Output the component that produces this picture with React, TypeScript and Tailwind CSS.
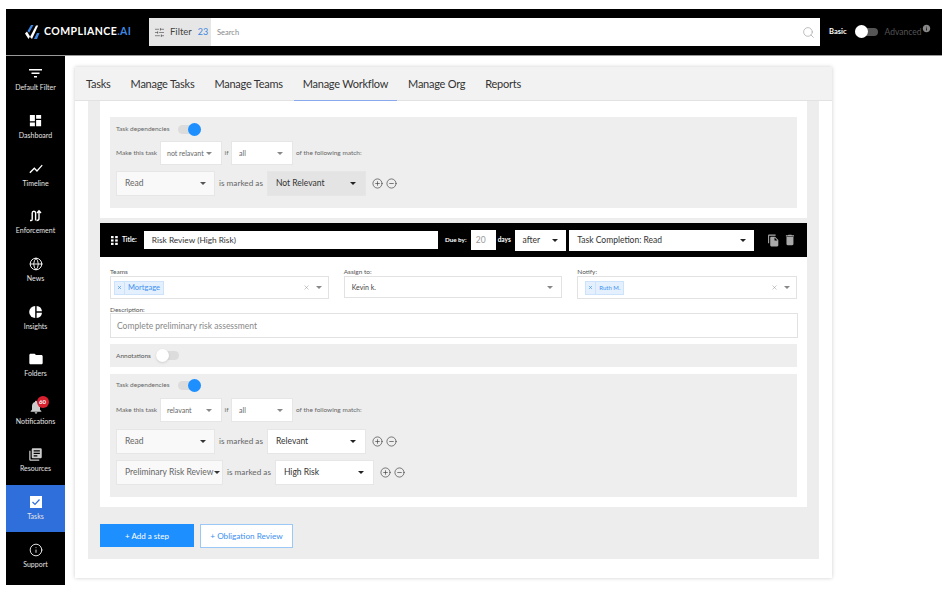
import React from "react";
import { Search, SlidersHorizontal, Globe, CirclePlus, CircleMinus, X, Info } from "lucide-react";
import { MdDashboard, MdShowChart, MdFolder, MdNotifications, MdLibraryBooks, MdFileCopy, MdDelete, MdInfo } from "react-icons/md";

const Caret = ({ className = "border-t-[#555]" }: { className?: string }) => (
  <span className={`w-0 h-0 border-x-[3px] border-x-transparent border-t-[3px] ${className}`} />
);

const Toggle = ({ on }: { on?: boolean }) => (
  <span className="relative block w-[23px] h-[9px] rounded-full bg-[#dcdcdc]">
    <span
      className={
        on
          ? "absolute right-0 top-[-2px] w-[13px] h-[13px] rounded-full bg-[#1e8fff]"
          : "absolute left-0 top-[-2px] w-[13px] h-[13px] rounded-full bg-white shadow"
      }
    />
  </span>
);

const Select = ({
  label,
  className,
  text = "text-[#555] text-[8.5px]",
  caret,
}: {
  label: string;
  className: string;
  text?: string;
  caret?: string;
}) => (
  <div className={`flex items-center justify-between border border-[#e6e6e6] ${className}`}>
    <span className={`whitespace-nowrap ${text}`}>{label}</span>
    <Caret className={caret} />
  </div>
);

const PlusMinus = () => (
  <div className="flex items-center gap-[3px] ml-[2px] text-[#444]">
    <CirclePlus size={11} strokeWidth={1.5} />
    <CircleMinus size={11} strokeWidth={1.5} />
  </div>
);

const Marked = () => <span className="text-[8.2px] text-[#666] whitespace-nowrap">is marked as</span>;

const MatchRow = ({ verb }: { verb: string }) => (
  <div className="flex items-center h-[24px] text-[6.5px] text-[#666]">
    <span className="w-[44px] whitespace-nowrap">Make this task</span>
    <Select label={verb} className="w-[62px] h-[24px] bg-white pl-[6px] pr-[9px]" text="text-[#666] text-[7px]" caret="border-t-[#888]" />
    <span className="w-[9px] text-center">if</span>
    <Select label="all" className="w-[62px] h-[24px] bg-white pl-[7px] pr-[9px]" text="text-[#666] text-[7px]" caret="border-t-[#888]" />
    <span className="ml-[3px] whitespace-nowrap">of the following match:</span>
  </div>
);

const DepHeader = () => (
  <div className="flex items-center h-[12px] text-[6.5px] text-[#666]">
    <span className="w-[62px] whitespace-nowrap">Task dependencies</span>
    <Toggle on />
  </div>
);

const Chip = ({ label, size }: { label: string; size: string }) => (
  <div className={`flex items-center h-[14px] bg-[#e4f0fd] border border-[#cde2fb] text-[#3d90f0] ${size}`}>
    <span className="flex items-center justify-center w-[10px] h-full border-r border-[#cde2fb]">
      <X size={5} strokeWidth={3} />
    </span>
    <span className="px-[3px] whitespace-nowrap">{label}</span>
  </div>
);

const ClearCaret = () => (
  <div className="flex items-center gap-[6px] text-[#888]">
    <X size={7} strokeWidth={1.5} />
    <Caret className="border-t-[#888]" />
  </div>
);

const Enforcement = () => (
  <svg width="14" height="14" viewBox="0 0 14 14" fill="none" stroke="white" strokeWidth="1.4">
    <path d="M1 11.5h1.2c.8 0 1-.6 1-1.2V4c0-2.4 3.4-2.4 3.4 0v7.5M7.6 11.5c1.6 0 2.4-.8 2.4-2V2M8 4l2-2.2L12 4" />
  </svg>
);

const InsightsIcon = () => (
  <svg width="14" height="14" viewBox="0 0 14 14" fill="white">
    <path d="M6.2 1A6 6 0 0 0 6.2 13z" />
    <path d="M7.6 1A6 6 0 0 1 13 6.3H7.6z" />
    <path d="M7.6 7.7H13A6 6 0 0 1 7.6 13z" />
  </svg>
);

const Grip = () => (
  <svg width="7" height="9" viewBox="0 0 7 9" fill="white">
    <rect x="0" y="0" width="2.6" height="2.2" />
    <rect x="4.2" y="0" width="2.6" height="2.2" />
    <rect x="0" y="3.4" width="2.6" height="2.2" />
    <rect x="4.2" y="3.4" width="2.6" height="2.2" />
    <rect x="0" y="6.8" width="2.6" height="2.2" />
    <rect x="4.2" y="6.8" width="2.6" height="2.2" />
  </svg>
);

const FilterIcon = () => (
  <svg width="13" height="11" viewBox="0 0 13 11" fill="white">
    <rect x="0" y="1" width="13" height="1.5" />
    <rect x="2.5" y="4.5" width="8" height="1.5" />
    <rect x="5" y="8" width="3" height="1.5" />
  </svg>
);

const TasksIcon = () => (
  <svg width="12" height="12" viewBox="0 0 12 12">
    <rect width="12" height="12" fill="white" />
    <path d="M2.5 6l2.5 2.5 4.5-5" fill="none" stroke="#2f6fdc" strokeWidth="1.2" />
  </svg>
);

const Logo = () => (
  <svg width="16" height="14" viewBox="0 0 16 14">
    <path d="M0 8.5l2-2 3 5-1.5 2.5z" fill="white" />
    <path d="M2.5 6L6 0h2.5L4.2 7.8z" fill="#3f86e0" />
    <path d="M5 12L11 0.5h2.2L7 14z" fill="white" />
    <path d="M9 14l3-6h2.5L12 14z" fill="#3f86e0" />
  </svg>
);

const navItems: { label: string; icon: React.ReactNode; active?: boolean; badge?: string }[] = [
  { label: "Default Filter", icon: <FilterIcon /> },
  { label: "Dashboard", icon: <MdDashboard size={15} /> },
  { label: "Timeline", icon: <MdShowChart size={16} /> },
  { label: "Enforcement", icon: <Enforcement /> },
  { label: "News", icon: <Globe size={14} strokeWidth={1.6} /> },
  { label: "Insights", icon: <InsightsIcon /> },
  { label: "Folders", icon: <MdFolder size={16} /> },
  { label: "Notifications", icon: <MdNotifications size={16} className="text-[#ccc]" />, badge: "60" },
  { label: "Resources", icon: <MdLibraryBooks size={15} className="text-[#ccc]" /> },
  { label: "Tasks", icon: <TasksIcon />, active: true },
  { label: "Support", icon: <Info size={14} strokeWidth={1.5} /> },
];

const tabs = ["Tasks", "Manage Tasks", "Manage Teams", "Manage Workflow", "Manage Org", "Reports"];

export default function App() {
  return (
    <div className="w-[949px] h-[593px] overflow-hidden bg-white pt-[9px] pl-[6px] pr-[7px] font-['Lato',sans-serif]">
      <header className="flex items-center h-[47px] bg-black border-b border-[#999]">
        <div className="flex items-center gap-[3px] w-[143px] pl-[19px]">
          <Logo />
          <span className="text-[10.5px] font-bold text-white tracking-[0.45px] whitespace-nowrap">
            COMPLIANCE<span className="text-[#3f86e0]">.AI</span>
          </span>
        </div>
        <div className="flex items-center w-[671px] h-[28px] bg-white">
          <div className="flex items-center w-[62px] h-full bg-[#e6e6e6] pl-[5px] text-[9.5px] text-[#444]">
            <SlidersHorizontal size={11} strokeWidth={1.3} />
            <span className="ml-[5px]">Filter</span>
            <span className="ml-[6px] text-[9px] text-[#3f86e0]">23</span>
          </div>
          <span className="ml-[6px] pt-[1px] text-[7.5px] text-[#888]">Search</span>
          <Search size={13} strokeWidth={1.4} className="ml-auto mr-[5px] text-[#aaa]" />
        </div>
        <span className="ml-[9px] text-[7.5px] font-bold text-white">Basic</span>
        <span className="relative ml-[8px] block w-[23px] h-[8px] rounded-full bg-[#555]">
          <span className="absolute left-0 top-[-3px] w-[13px] h-[13px] rounded-full bg-white" />
        </span>
        <span className="ml-[7px] text-[8.5px] text-[#555]">Advanced</span>
        <MdInfo size={9} className="mb-[7px] ml-[1px] text-[#888]" />
      </header>

      <div className="flex">
        <nav className="w-[59px] h-[529px] shrink-0 bg-black">
          {navItems.map((item) => (
            <div
              key={item.label}
              className={`flex flex-col items-center justify-center h-[47.65px] gap-[2px] pb-[2px] ${item.active ? "bg-[#2f6fdc]" : ""}`}
            >
              <div className="relative flex items-center justify-center h-[16px] text-white">
                {item.icon}
                {item.badge && (
                  <span className="absolute left-[9px] top-[-3px] flex items-center justify-center w-[12px] h-[12px] rounded-full bg-[#d8202f] text-[6px] font-bold text-white">
                    {item.badge}
                  </span>
                )}
              </div>
              <span className="text-[7px] leading-[9px] text-[#e5e5e5] whitespace-nowrap">{item.label}</span>
            </div>
          ))}
        </nav>

        <main className="flex-1 pl-[10px] pt-[11px]">
          <div className="w-[757px] h-[511px] bg-white shadow-[0_0_4px_rgba(0,0,0,0.2)]">
            <div className="flex h-[34px] pl-[11px] gap-[20px] bg-[#f2f2f2] border-b border-[#e2e2e2] text-[11px] tracking-[-0.25px] text-[#333]">
              {tabs.map((tab) => (
                <div key={tab} className="relative flex items-center pt-[1px] whitespace-nowrap">
                  {tab}
                  {tab === "Manage Workflow" && (
                    <span className="absolute left-[-9px] right-[-9px] bottom-[-1px] h-px bg-[#8aa8ec]" />
                  )}
                </div>
              ))}
            </div>

            <div className="mx-[13px] h-[458px] bg-[#ededed] px-[12px]">
              {/* first step, scrolled under the tabs */}
              <div className="h-[117px] bg-white px-[10px] pt-[16px]">
                <div className="h-[91px] bg-[#eeeeee] px-[6px] pt-[6px]">
                  <DepHeader />
                  <div className="mt-[6px]">
                    <MatchRow verb="not relavant" />
                  </div>
                  <div className="flex items-center gap-[4px] mt-[6px]">
                    <Select label="Read" className="w-[99px] h-[25px] bg-[#f9f9f9] pl-[8px] pr-[8px]" text="text-[#666] text-[8.5px]" />
                    <Marked />
                    <Select label="Not Relevant" className="w-[99px] h-[25px] bg-[#e4e4e4] pl-[8px] pr-[9px]" text="text-[#333] text-[8.5px]" caret="border-t-[#222]" />
                    <PlusMinus />
                  </div>
                </div>
              </div>

              <div className="flex items-center h-[34px] mt-[5px] bg-black pl-[11px] pr-[10px]">
                <Grip />
                <span className="ml-[4px] w-[22px] text-[6.5px] font-bold text-white">Title:</span>
                <div className="flex items-center w-[296px] h-[18px] bg-white pl-[8px] text-[8.3px] text-[#333]">Risk Review (High Risk)</div>
                <span className="ml-[6px] pl-[1px] w-[27px] text-[6.3px] font-bold text-white whitespace-nowrap">Due by:</span>
                <div className="flex items-center w-[25px] h-[20px] bg-white pl-[5px] text-[8.5px] text-[#999]">20</div>
                <span className="mx-[2px] w-[15px] text-[6.5px] font-bold text-white">days</span>
                <Select label="after" className="w-[52px] h-[21px] bg-white pl-[8px] pr-[8px] border-0" text="text-[#333] text-[8.5px]" caret="border-t-[#222]" />
                <Select label="Task Completion: Read" className="ml-[3px] w-[186px] h-[21px] bg-white pl-[8px] pr-[8px] border-0" text="text-[#333] text-[8.5px]" caret="border-t-[#222]" />
                <MdFileCopy size={13} className="ml-[13px] text-[#aaa]" />
                <MdDelete size={14} className="ml-[3px] text-[#aaa]" />
              </div>

              <div className="h-[250px] bg-white px-[10px] pt-[11px]">
                <div className="flex gap-[15px] text-[6.5px] text-[#555]">
                  <div className="w-[219px]">
                    <div className="h-[8px] leading-[8px]">Teams</div>
                    <div className="flex items-center justify-between h-[23px] border border-[#e2e2e2] pl-[3px] pr-[6px]">
                      <Chip label="Mortgage" size="text-[7.5px]" />
                      <ClearCaret />
                    </div>
                  </div>
                  <div className="w-[219px]">
                    <div className="h-[8px] leading-[8px]">Assign to:</div>
                    <div className="flex items-center justify-between h-[22px] border border-[#e2e2e2] pl-[7px] pr-[8px]">
                      <span className="text-[7px] text-[#444]">Kevin k.</span>
                      <Caret className="border-t-[#888]" />
                    </div>
                  </div>
                  <div className="w-[220px]">
                    <div className="h-[8px] leading-[8px]">Notify:</div>
                    <div className="flex items-center justify-between h-[23px] border border-[#e2e2e2] pl-[7px] pr-[6px]">
                      <Chip label="Ruth M." size="text-[6px]" />
                      <ClearCaret />
                    </div>
                  </div>
                </div>

                <div className="mt-[7px] h-[7px] leading-[7px] text-[6.5px] text-[#555]">Description:</div>
                <div className="flex items-center h-[25px] w-[688px] border border-[#e2e2e2] pl-[6px] pt-[1px] text-[8.5px] text-[#888]">
                  Complete preliminary risk assessment
                </div>

                <div className="flex items-center mt-[6px] h-[23px] w-[687px] bg-[#eeeeee] pl-[6px] text-[6.5px] text-[#555]">
                  <span className="w-[40px]">Annotations</span>
                  <Toggle />
                </div>

                <div className="mt-[7px] h-[123px] w-[687px] bg-[#eeeeee] px-[6px] pt-[5px]">
                  <DepHeader />
                  <div className="mt-[7px]">
                    <MatchRow verb="relavant" />
                  </div>
                  <div className="flex items-center gap-[4px] mt-[7px]">
                    <Select label="Read" className="w-[99px] h-[25px] bg-[#f9f9f9] pl-[8px] pr-[8px]" text="text-[#666] text-[8.5px]" caret="border-t-[#333]" />
                    <Marked />
                    <Select label="Relevant" className="w-[99px] h-[25px] bg-white pl-[8px] pr-[9px]" text="text-[#333] text-[8.5px]" caret="border-t-[#222]" />
                    <PlusMinus />
                  </div>
                  <div className="flex items-center gap-[4px] mt-[6px]">
                    <Select label="Preliminary Risk Review" className="w-[107px] h-[25px] bg-[#f9f9f9] pl-[8px] pr-[2px]" text="text-[#666] text-[8.5px]" caret="border-t-[#333]" />
                    <Marked />
                    <Select label="High Risk" className="w-[99px] h-[25px] bg-white pl-[8px] pr-[9px]" text="text-[#333] text-[8.5px]" caret="border-t-[#222]" />
                    <PlusMinus />
                  </div>
                </div>
              </div>

              <div className="flex gap-[6px] mt-[17px]">
                <div className="flex items-center justify-center w-[94px] h-[23px] bg-[#1e8fff] text-[8px] text-white">+ Add a step</div>
                <div className="flex items-center justify-center w-[93px] h-[24px] bg-white border border-[#9cc8f8] text-[8.2px] text-[#3d90f0]">+ Obligation Review</div>
              </div>
            </div>
          </div>
        </main>
      </div>
    </div>
  );
}
